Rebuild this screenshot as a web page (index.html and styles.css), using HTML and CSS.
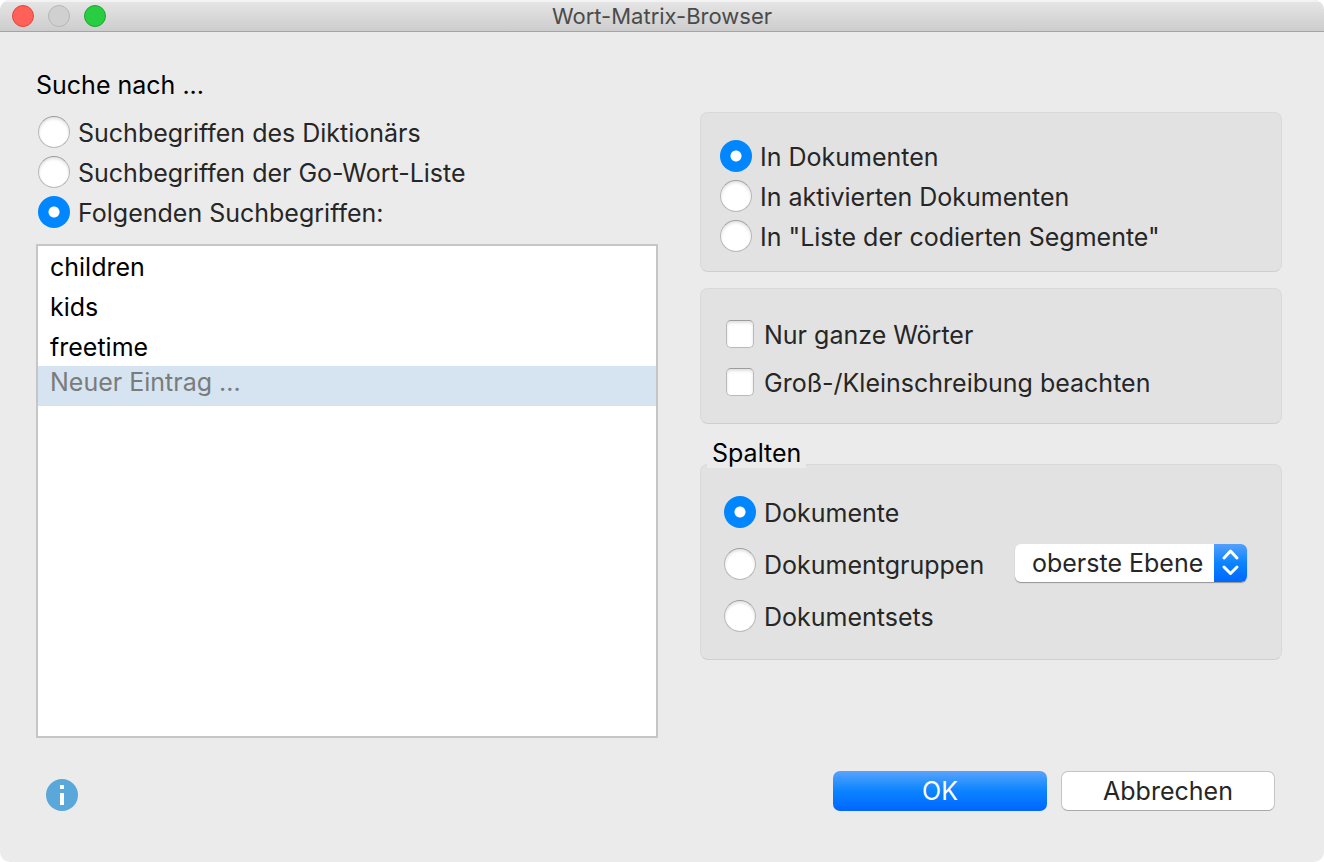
FILE: index.html
```html
<!DOCTYPE html>
<html lang="de">

<head>
    <meta charset="UTF-8">
    <meta name="viewport" content="width=device-width, initial-scale=1.0">
    <title>Wort-Matrix-Browser</title>
    <link rel="stylesheet" href="styles.css">
</head>

<body>

    <form class="window">
        <!-- Title bar -->
        <header class="titlebar">
            <div class="window-buttons">
                <button type="button" class="dot dot-close" aria-label="Schließen"></button>
                <button type="button" class="dot dot-minimize" aria-label="Minimieren" disabled></button>
                <button type="button" class="dot dot-zoom" aria-label="Vergrößern"></button>
            </div>
            <h1>Wort-Matrix-Browser</h1>
        </header>

        <main class="content">
            <!-- Search terms -->
            <section class="terms">
                <h2 id="terms-title">Suche nach ...</h2>
                <div class="options" role="radiogroup" aria-labelledby="terms-title">
                    <label class="option"><input type="radio" name="source"><span>Suchbegriffen des Diktionärs</span></label>
                    <label class="option"><input type="radio" name="source"><span>Suchbegriffen der Go-Wort-Liste</span></label>
                    <label class="option"><input type="radio" name="source" checked><span>Folgenden Suchbegriffen:</span></label>
                </div>
                <ul class="term-list">
                    <li>children</li>
                    <li>kids</li>
                    <li>freetime</li>
                    <li class="selected"><input type="text" class="new-term" placeholder="Neuer Eintrag ..." aria-label="Neuer Eintrag"></li>
                </ul>
            </section>

            <!-- Settings -->
            <section class="settings">
                <div class="panel panel-scope" role="radiogroup" aria-label="Bereich">
                    <label class="option"><input type="radio" name="scope" checked><span>In Dokumenten</span></label>
                    <label class="option"><input type="radio" name="scope"><span>In aktivierten Dokumenten</span></label>
                    <label class="option"><input type="radio" name="scope"><span>In "Liste der codierten Segmente"</span></label>
                </div>

                <div class="panel panel-match">
                    <label class="option"><input type="checkbox"><span>Nur ganze Wörter</span></label>
                    <label class="option"><input type="checkbox"><span>Groß-/Kleinschreibung beachten</span></label>
                </div>

                <div class="columns" role="radiogroup" aria-labelledby="columns-title">
                    <h2 id="columns-title" class="panel-title">Spalten</h2>
                    <div class="panel panel-columns">
                        <label class="option"><input type="radio" name="columns" checked><span>Dokumente</span></label>
                        <div class="option-row">
                            <label class="option"><input type="radio" name="columns"><span>Dokumentgruppen</span></label>
                            <div class="select">
                                <select aria-label="Ebene">
                                    <option>oberste Ebene</option>
                                </select>
                                <svg class="select-arrows" viewBox="0 0 33 38" aria-hidden="true">
                                    <path d="M10 14 L16.500 7 L23 14 M10 23 L16.500 29.500 L23 23" />
                                </svg>
                            </div>
                        </div>
                        <label class="option"><input type="radio" name="columns"><span>Dokumentsets</span></label>
                    </div>
                </div>
            </section>
        </main>

        <footer class="footer">
            <button type="button" class="info" aria-label="Hilfe">
                <svg viewBox="0 0 32 32" aria-hidden="true">
                    <circle cx="16" cy="16" r="16" />
                    <rect x="14" y="6" width="4" height="4" />
                    <rect x="14" y="14" width="4" height="12" />
                </svg>
            </button>
            <div class="actions">
                <button type="submit" class="button button-primary">OK</button>
                <button type="button" class="button">Abbrechen</button>
            </div>
        </footer>
    </form>

</body>

</html>
```
FILE: styles.css
```css
* {
    box-sizing: border-box;
}

body {
    margin: 0;
    background-color: white;
    color: #262626;
    font-family: Inter, "Liberation Sans", sans-serif;
    font-size: 25px;
}

h1,
h2,
ul {
    margin: 0;
    padding: 0;
    font-weight: 400;
}

button,
input,
select {
    margin: 0;
    padding: 0;
    border: none;
    font: inherit;
    color: inherit;
}

.window {
    display: flex;
    flex-direction: column;
    min-height: 100vh;
    border-radius: 10px;
    background-color: #ebebeb;
    overflow: hidden;
}

/* Title bar */
.titlebar {
    display: grid;
    grid-template-columns: 1fr auto 1fr;
    align-items: center;
    height: 32px;
    padding: 0 12px;
    border-bottom: 1px solid #a4a4a4;
    background: linear-gradient(#e6e6e6, #cdcdcd);
    box-shadow: inset 0 2px #f3f3f3;
}

.titlebar h1 {
    font-size: 22px;
    line-height: 30px;
    color: #4b4b4b;
}

.window-buttons {
    display: flex;
    gap: 14px;
}

.dot {
    width: 22px;
    height: 22px;
    border: 1px solid #e2443c;
    border-radius: 50%;
    background-color: #ff6058;
}

.dot-minimize {
    border-color: #b6b6b6;
    background-color: #d0d0d0;
}

.dot-zoom {
    border-color: #17a82b;
    background-color: #29cd41;
}

/* Two columns */
.content {
    flex: 1;
    display: grid;
    grid-template-columns: 622fr 582fr;
    gap: 42px;
    padding: 36px 42px 0 36px;
}

.content h2 {
    font-size: 25px;
    line-height: 34px;
    color: black;
}

.terms {
    display: flex;
    flex-direction: column;
}

.options {
    margin: 10px 0 12px;
}

.option {
    display: flex;
    align-items: center;
    gap: 8px;
    height: 40px;
    white-space: nowrap;
}

.option span {
    padding-top: 2px;
}

.terms .option {
    padding-left: 2px;
}

/* Radios and tick boxes */
.option input {
    flex: none;
    appearance: none;
    background-color: white;
    border: 1px solid #b9b9b9;
    border-top-color: #9c9c9c;
    box-shadow: inset 0 2px 3px rgba(0, 0, 0, 0.12);
}

.option input[type="radio"] {
    width: 32px;
    height: 32px;
    border-radius: 50%;
}

.option input[type="radio"]:checked {
    border: none;
    background: radial-gradient(circle, white 5px, #0087ff 6px);
    box-shadow: none;
}

.option input[type="checkbox"] {
    width: 28px;
    height: 28px;
    border-radius: 5px;
}

/* List of terms */
.term-list {
    flex: 1;
    border: 2px solid #c6c6c6;
    background-color: white;
    color: black;
    list-style: none;
}

.term-list li {
    height: 40px;
    padding: 0 12px;
    line-height: 42px;
}

.term-list .selected {
    background-color: #d5e4f0;
}

.new-term {
    display: block;
    width: 100%;
    height: 32px;
    background: transparent;
    outline: none;
}

.new-term::placeholder {
    color: #7b7b7b;
    opacity: 1;
}

/* Panels */
.settings {
    display: flex;
    flex-direction: column;
    gap: 16px;
    padding-top: 44px;
}

.panel {
    border: 1px solid #d9d9d9;
    border-bottom-color: #cfcfcf;
    border-radius: 8px;
    background-color: #e2e2e2;
}

.panel-scope {
    padding: 23px 19px 15px;
}

.panel-match {
    padding: 21px 25px 17px;
}

.panel-match .option {
    gap: 10px;
    height: 48px;
}

.panel-columns {
    padding: 21px 23px 17px;
}

.panel-columns .option {
    height: 52px;
}

.content .panel-title {
    position: relative;
    width: fit-content;
    margin: -4px 0 -4px 7px;
    padding: 2px 5px 0;
    line-height: 30px;
    background-color: #ebebeb;
}

.option-row {
    display: flex;
    align-items: center;
    justify-content: space-between;
    padding-right: 11px;
}

/* Drop-down */
.select {
    position: relative;
    width: 232px;
    margin-bottom: 2px;
}

.select select {
    display: block;
    width: 100%;
    height: 38px;
    padding: 0 36px 0 17px;
    border-radius: 6px;
    appearance: none;
    background-color: white;
    box-shadow: 0 1px 1px rgba(0, 0, 0, 0.35);
}

.select-arrows {
    position: absolute;
    top: 0;
    right: 0;
    width: 33px;
    height: 38px;
    border-radius: 0 6px 6px 0;
    background: linear-gradient(#559ffb, #0a84ff 50%, #0067ff);
    pointer-events: none;
}

.select-arrows path {
    fill: none;
    stroke: white;
    stroke-width: 3;
    stroke-linecap: round;
    stroke-linejoin: round;
}

/* Footer */
.footer {
    display: flex;
    align-items: flex-end;
    justify-content: space-between;
    padding: 33px 49px 51px 46px;
}

.info {
    width: 32px;
    height: 32px;
    background: none;
}

.info svg {
    display: block;
    fill: white;
}

.info circle {
    fill: #5aa7d9;
}

.actions {
    display: flex;
    gap: 14px;
}

.button {
    width: 214px;
    height: 40px;
    border: 1px solid #c4c4c4;
    border-bottom-color: #a9a9a9;
    border-radius: 7px;
    background-color: white;
}

.button-primary {
    border: none;
    background: linear-gradient(#58a3fc, #0a84ff 50%, #0066ff);
    color: white;
}
```
